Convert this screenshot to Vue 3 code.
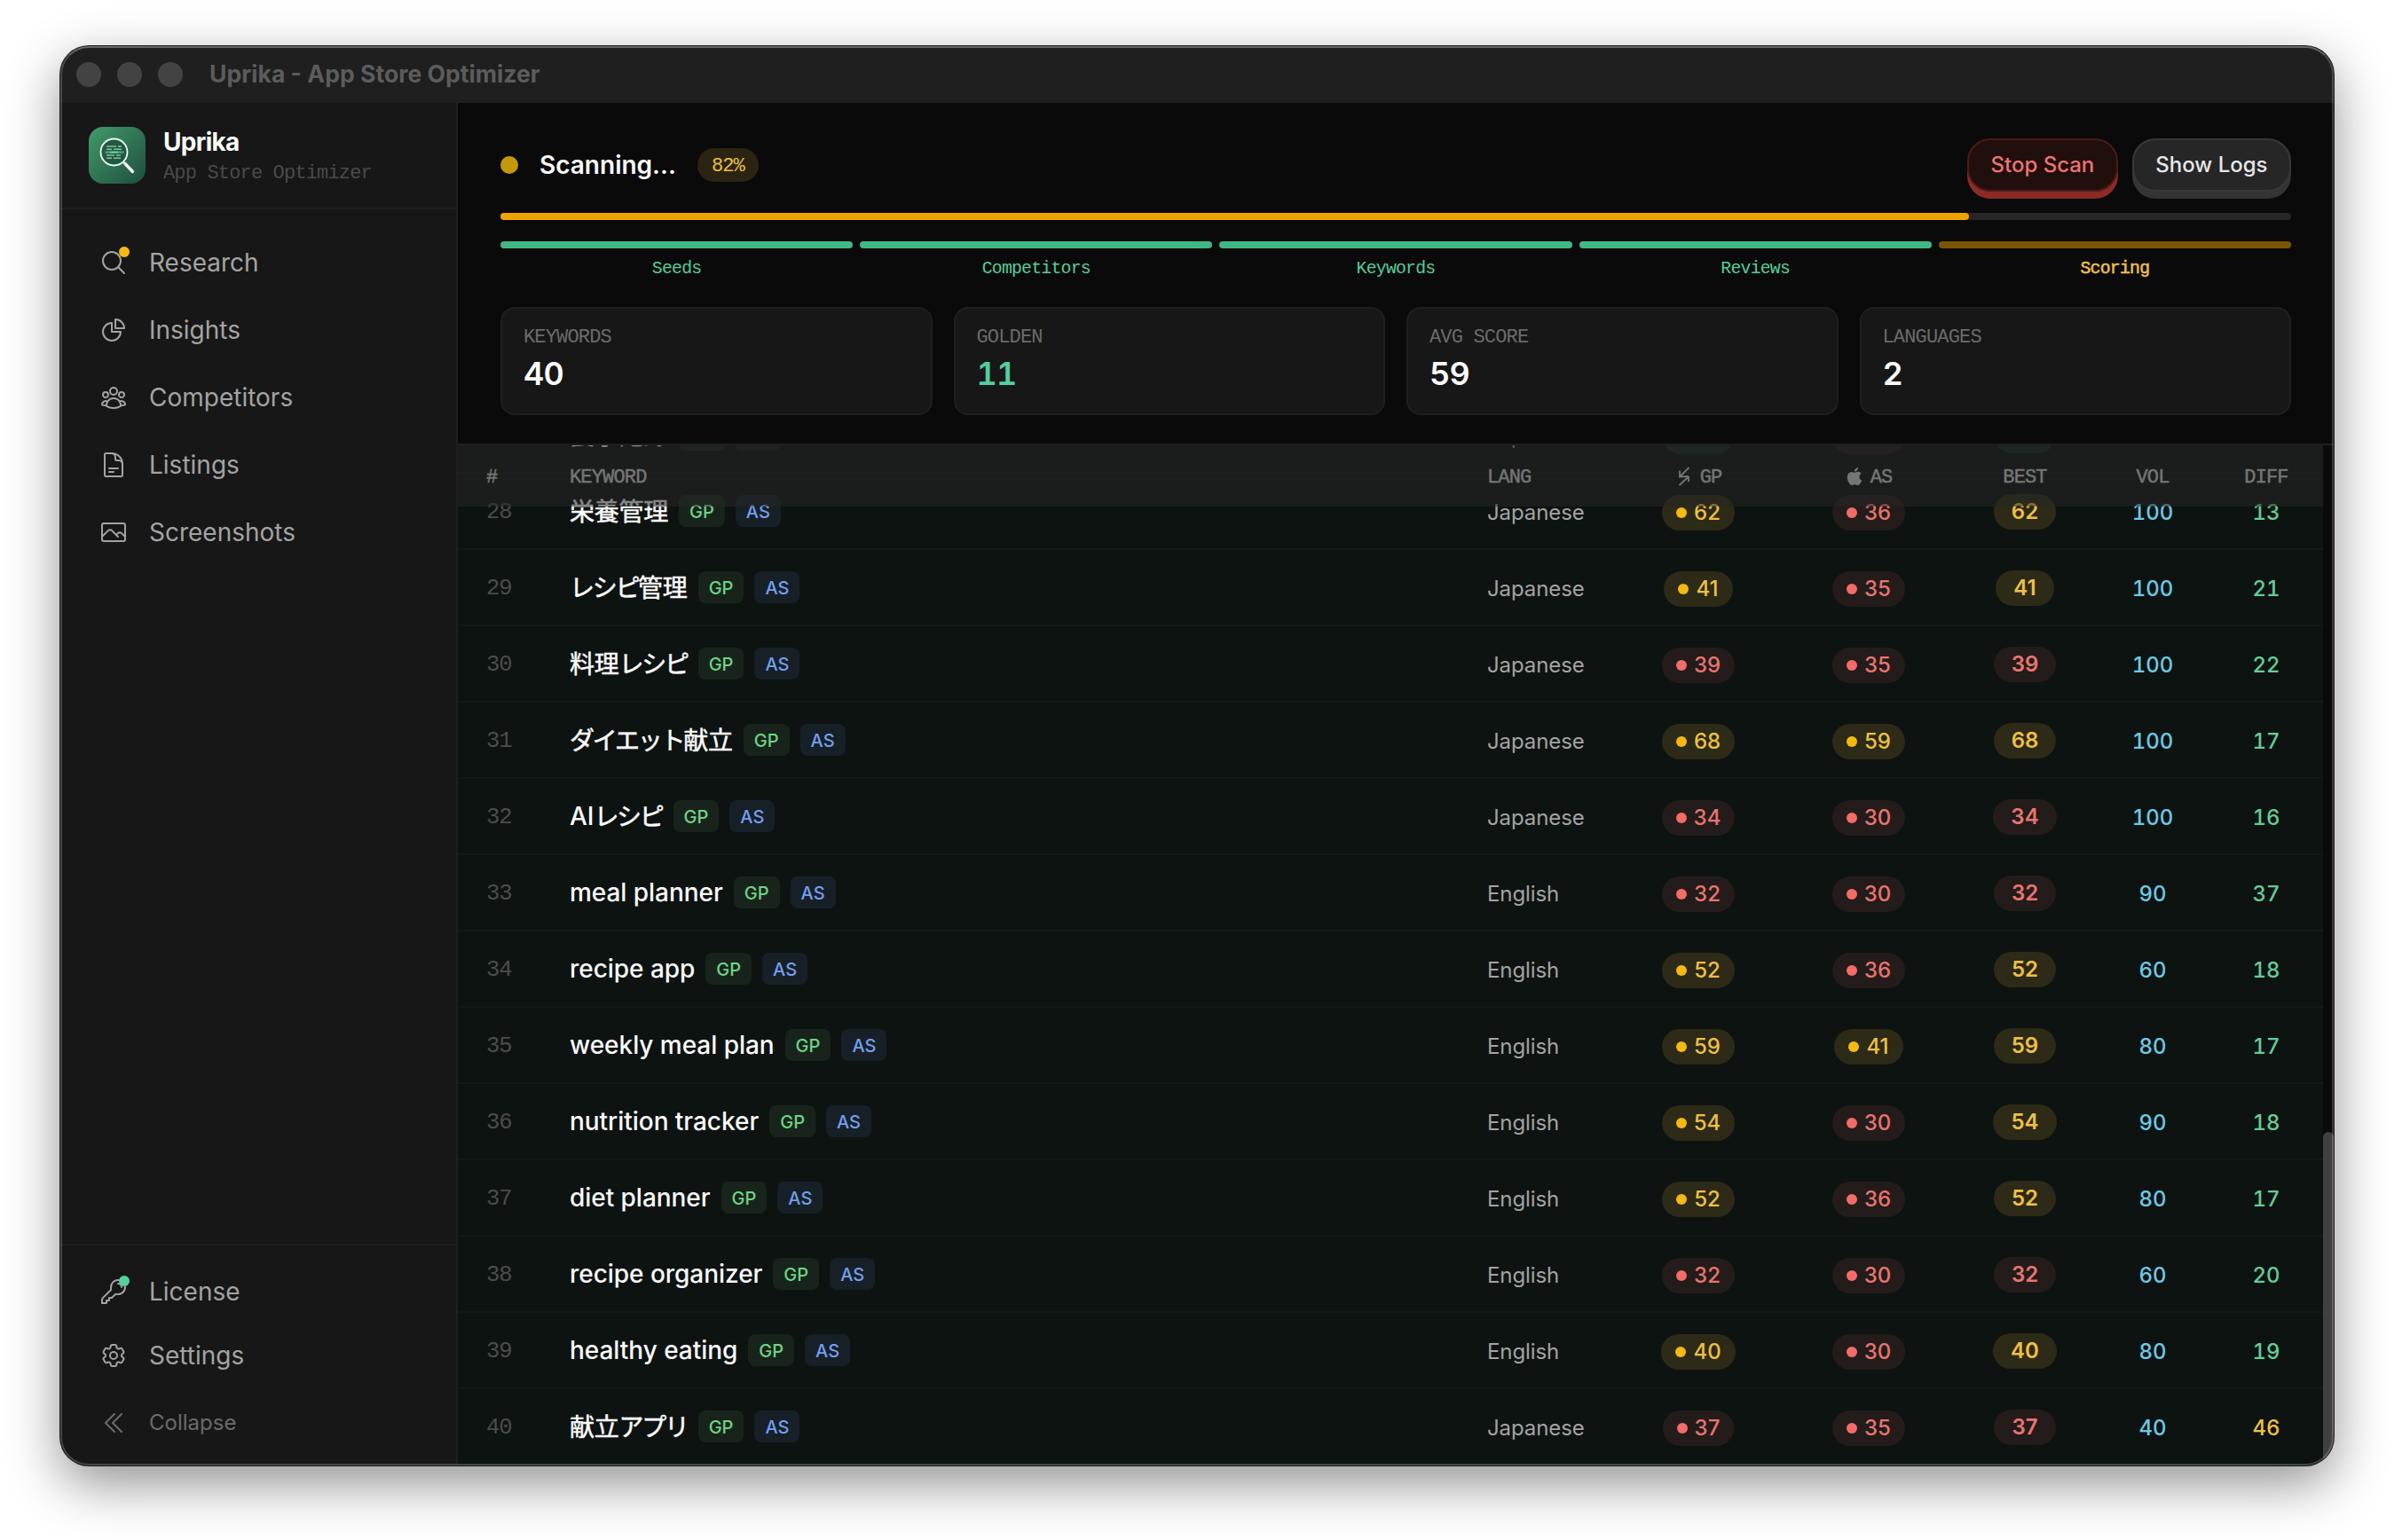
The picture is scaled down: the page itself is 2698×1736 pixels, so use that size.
<template>
  <div class="desktop">
    <div class="window">
      <header class="titlebar">
        <span v-for="n in 3" :key="n" class="light"></span>
        <span class="titlebar-text">Uprika - App Store Optimizer</span>
      </header>

      <div class="body">
        <aside class="sidebar">
          <div class="brand">
            <svg class="logo" viewBox="0 0 64 64">
              <defs>
                <linearGradient id="logo-bg" x1="0" y1="0" x2="1" y2="1">
                  <stop offset="0" stop-color="#429a6b" />
                  <stop offset="1" stop-color="#1d4f3d" />
                </linearGradient>
              </defs>
              <rect width="64" height="64" rx="16" fill="url(#logo-bg)" />
              <circle cx="28.5" cy="28.5" r="15" fill="#1f5a41" stroke="#f2fbf6" stroke-width="1.8" />
              <path d="M38.5 39l3.5 3" stroke="#f2fbf6" stroke-width="2" />
              <path d="M41 41.5l8.5 9" stroke="#f2fbf6" stroke-width="3.4" stroke-linecap="round" />
              <g stroke="#8fb8a3" stroke-width="1.5">
                <path d="M20 22h11M33 22h4M20 25.2h6M28 25.2h9M20 32h9M31 32h5M20 35.2h6M28 35.2h8" />
              </g>
              <path d="M18.5 28.6h21" stroke="#3f9d70" stroke-width="2.6" />
              <path d="M24 28.6h9" stroke="#6fd3a0" stroke-width="1.6" />
            </svg>
            <div class="brand-text">
              <span class="brand-name">Uprika</span>
              <span class="brand-sub">App Store Optimizer</span>
            </div>
          </div>

          <nav class="nav">
            <a v-for="item in navItems" :key="item.label" class="nav-item">
              <span class="nav-icon">
                <svg viewBox="0 0 24 24"><path v-for="d in item.paths" :key="d" :d="d" /></svg>
                <i v-if="item.dot" class="nav-dot" :class="item.dot"></i>
              </span>
              {{ item.label }}
            </a>
          </nav>

          <div class="nav-bottom">
            <a v-for="item in bottomItems" :key="item.label" class="nav-item" :class="{ collapse: item.collapse }">
              <span class="nav-icon">
                <svg viewBox="0 0 24 24"><path v-for="d in item.paths" :key="d" :d="d" /></svg>
                <i v-if="item.dot" class="nav-dot" :class="item.dot"></i>
              </span>
              {{ item.label }}
            </a>
          </div>
        </aside>

        <main class="main">
          <section class="scan">
            <div class="scan-head">
              <span class="scan-dot"></span>
              <h1 class="scan-title">Scanning...</h1>
              <span class="scan-percent">{{ progress }}%</span>
              <div class="actions">
                <button class="btn btn-stop">Stop Scan</button>
                <button class="btn btn-logs">Show Logs</button>
              </div>
            </div>

            <div class="progress">
              <div class="progress-fill" :style="{ width: progress + '%' }"></div>
            </div>

            <div class="steps">
              <div v-for="step in steps" :key="step" class="step" :class="{ active: step === activeStep }">
                <div class="step-bar"></div>
                <span class="step-label">{{ step }}</span>
              </div>
            </div>

            <div class="stats">
              <div v-for="stat in stats" :key="stat.label" class="stat">
                <span class="stat-label">{{ stat.label }}</span>
                <span class="stat-value" :class="{ golden: stat.golden }">{{ stat.value }}</span>
              </div>
            </div>
          </section>

          <section class="results">
            <div class="table">
              <div class="rows">
                <div v-for="row in rows" :key="row.n" class="row">
                  <span class="cell-num">{{ row.n }}</span>
                  <span class="cell-keyword">
                    <span class="keyword">
                      <span v-for="run in textRuns(row.keyword)" :key="run.text" :class="run.script">{{ run.text }}</span>
                    </span>
                    <span class="badge badge-gp">GP</span>
                    <span class="badge badge-as">AS</span>
                  </span>
                  <span class="cell-lang">{{ row.lang }}</span>
                  <span class="cell-center">
                    <span class="score" :class="tone(row.gp)"><i class="score-dot"></i><b>{{ row.gp }}</b></span>
                  </span>
                  <span class="cell-center">
                    <span class="score" :class="tone(row.as)"><i class="score-dot"></i><b>{{ row.as }}</b></span>
                  </span>
                  <span class="cell-center">
                    <span class="score best" :class="tone(Math.max(row.gp, row.as))">
                      <b>{{ Math.max(row.gp, row.as) }}</b>
                    </span>
                  </span>
                  <span class="cell-center metric vol">{{ row.vol }}</span>
                  <span class="cell-center metric" :class="row.diff > 40 ? 'hard' : 'easy'">{{ row.diff }}</span>
                </div>
              </div>

              <div class="row head">
                <span class="cell-num">#</span>
                <span class="cell-keyword">KEYWORD</span>
                <span class="cell-lang">LANG</span>
                <span class="cell-center head-store">
                  <svg viewBox="0 0 20 20">
                    <path class="icon-play" d="M15.5 0L5 10.5M5 3.5v7l10-.5M15.5 10L4.500 20M15 10v6" />
                  </svg>
                  <span>GP</span>
                </span>
                <span class="cell-center head-store">
                  <svg viewBox="0 0 24 24">
                    <path class="icon-apple" d="M12.152 6.896c-.948 0-2.415-1.078-3.960-1.040-2.040.027-3.910 1.183-4.961 3.014-2.117 3.675-.546 9.103 1.519 12.090 1.013 1.454 2.208 3.090 3.792 3.039 1.520-.065 2.090-.987 3.935-.987 1.831 0 2.350.987 3.960.948 1.637-.026 2.676-1.480 3.676-2.948 1.156-1.688 1.636-3.325 1.662-3.415-.039-.013-3.182-1.221-3.220-4.857-.026-3.040 2.480-4.494 2.597-4.559-1.429-2.090-3.623-2.324-4.390-2.376-2-.156-3.675 1.090-4.610 1.090zM15.530 3.830c.843-1.012 1.400-2.427 1.245-3.830-1.207.052-2.662.805-3.532 1.818-.780.896-1.454 2.338-1.273 3.714 1.338.104 2.715-.688 3.559-1.701" />
                  </svg>
                  <span>AS</span>
                </span>
                <span class="cell-center">BEST</span>
                <span class="cell-center">VOL</span>
                <span class="cell-center">DIFF</span>
              </div>
            </div>
            <div class="scrollbar"><div class="thumb"></div></div>
          </section>
        </main>
      </div>
    </div>
  </div>
</template>

<script setup>
import { ref } from 'vue';

const progress = ref(82);
const steps = ['Seeds', 'Competitors', 'Keywords', 'Reviews', 'Scoring'];
const activeStep = ref('Scoring');

const navItems = [
  {
    label: 'Research',
    dot: 'yellow',
    paths: ['m21 21-5.197-5.197m0 0A7.500 7.500 0 1 0 5.196 5.196a7.500 7.500 0 0 0 10.607 10.607Z'],
  },
  {
    label: 'Insights',
    paths: [
      'M10.500 6a7.500 7.500 0 1 0 7.500 7.500h-7.500V6Z',
      'M13.500 10.500H21A7.500 7.500 0 0 0 13.500 3v7.500Z',
    ],
  },
  {
    label: 'Competitors',
    paths: [
      'M18 18.720a9.094 9.094 0 0 0 3.741-.479 3 3 0 0 0-4.682-2.720m.940 3.198.001.031c0 .225-.012.447-.037.666A11.944 11.944 0 0 1 12 21c-2.170 0-4.207-.576-5.963-1.584A6.062 6.062 0 0 1 6 18.719m12 0a5.971 5.971 0 0 0-.941-3.197m0 0A5.995 5.995 0 0 0 12 12.750a5.995 5.995 0 0 0-5.058 2.772m0 0a3 3 0 0 0-4.681 2.720 8.986 8.986 0 0 0 3.740.477m.940-3.197a5.971 5.971 0 0 0-.940 3.197M15 6.750a3 3 0 1 1-6 0 3 3 0 0 1 6 0Zm6 3a2.250 2.250 0 1 1-4.500 0 2.250 2.250 0 0 1 4.500 0Zm-13.500 0a2.250 2.250 0 1 1-4.500 0 2.250 2.250 0 0 1 4.500 0Z',
    ],
  },
  {
    label: 'Listings',
    paths: [
      'M19.500 14.250v-2.625a3.375 3.375 0 0 0-3.375-3.375h-1.500A1.125 1.125 0 0 1 13.500 7.125v-1.500a3.375 3.375 0 0 0-3.375-3.375H8.250m0 12.750h7.500m-7.500 3H12M10.500 2.250H5.625c-.621 0-1.125.504-1.125 1.125v17.250c0 .621.504 1.125 1.125 1.125h12.750c.621 0 1.125-.504 1.125-1.125V11.250a9 9 0 0 0-9-9Z',
    ],
  },
  {
    label: 'Screenshots',
    paths: [
      'm2.250 15.750 5.159-5.159a2.250 2.250 0 0 1 3.182 0l5.159 5.159m-1.500-1.500 1.409-1.409a2.250 2.250 0 0 1 3.182 0l2.909 2.909m-18 3.750h16.500a1.500 1.500 0 0 0 1.500-1.500V6a1.500 1.500 0 0 0-1.500-1.500H3.750A1.500 1.500 0 0 0 2.250 6v12a1.500 1.500 0 0 0 1.500 1.500Z',
    ],
  },
];

const bottomItems = [
  {
    label: 'License',
    dot: 'green',
    paths: [
      'M15.750 5.250a3 3 0 0 1 3 3m3 0a6 6 0 0 1-7.029 5.912c-.563-.097-1.159.026-1.563.430L10.500 17.250H8.250v2.250H6v2.250H2.250v-2.818c0-.597.237-1.170.659-1.591l6.499-6.499c.404-.404.527-1 .430-1.563A6 6 0 1 1 21.750 8.250Z',
    ],
  },
  {
    label: 'Settings',
    paths: [
      'M9.594 3.940c.090-.542.560-.940 1.110-.940h2.593c.550 0 1.020.398 1.110.940l.213 1.281c.063.374.313.686.645.870.074.040.147.083.220.127.325.196.720.257 1.075.124l1.217-.456a1.125 1.125 0 0 1 1.370.490l1.296 2.247a1.125 1.125 0 0 1-.260 1.431l-1.003.827c-.293.241-.438.613-.430.992a7.723 7.723 0 0 1 0 .255c-.008.378.137.750.430.991l1.004.827c.424.350.534.955.260 1.430l-1.298 2.247a1.125 1.125 0 0 1-1.369.491l-1.217-.456c-.355-.133-.750-.072-1.076.124a6.470 6.470 0 0 1-.220.128c-.331.183-.581.495-.644.869l-.213 1.281c-.090.543-.560.940-1.110.940h-2.594c-.550 0-1.019-.398-1.110-.940l-.213-1.281c-.062-.374-.312-.686-.644-.870a6.520 6.520 0 0 1-.220-.127c-.325-.196-.720-.257-1.076-.124l-1.217.456a1.125 1.125 0 0 1-1.369-.490l-1.297-2.247a1.125 1.125 0 0 1 .260-1.431l1.004-.827c.292-.240.437-.613.430-.991a6.932 6.932 0 0 1 0-.255c.007-.380-.138-.751-.430-.992l-1.004-.827a1.125 1.125 0 0 1-.260-1.430l1.297-2.247a1.125 1.125 0 0 1 1.370-.491l1.216.456c.356.133.751.072 1.076-.124.072-.044.146-.086.220-.128.332-.183.582-.495.644-.869l.214-1.280Z',
      'M15 12a3 3 0 1 1-6 0 3 3 0 0 1 6 0Z',
    ],
  },
  {
    label: 'Collapse',
    collapse: true,
    paths: ['m18.750 4.500-7.500 7.500 7.500 7.500m-6-15L5.250 12l7.500 7.500'],
  },
];

const stats = [
  { label: 'KEYWORDS', value: 40 },
  { label: 'GOLDEN', value: 11, golden: true },
  { label: 'AVG SCORE', value: 59 },
  { label: 'LANGUAGES', value: 2 },
];

const rows = [
  { n: 27, keyword: '食事記録', lang: 'Japanese', gp: 72, as: 36, vol: 100, diff: 15 },
  { n: 28, keyword: '栄養管理', lang: 'Japanese', gp: 62, as: 36, vol: 100, diff: 13 },
  { n: 29, keyword: 'レシピ管理', lang: 'Japanese', gp: 41, as: 35, vol: 100, diff: 21 },
  { n: 30, keyword: '料理レシピ', lang: 'Japanese', gp: 39, as: 35, vol: 100, diff: 22 },
  { n: 31, keyword: 'ダイエット献立', lang: 'Japanese', gp: 68, as: 59, vol: 100, diff: 17 },
  { n: 32, keyword: 'AIレシピ', lang: 'Japanese', gp: 34, as: 30, vol: 100, diff: 16 },
  { n: 33, keyword: 'meal planner', lang: 'English', gp: 32, as: 30, vol: 90, diff: 37 },
  { n: 34, keyword: 'recipe app', lang: 'English', gp: 52, as: 36, vol: 60, diff: 18 },
  { n: 35, keyword: 'weekly meal plan', lang: 'English', gp: 59, as: 41, vol: 80, diff: 17 },
  { n: 36, keyword: 'nutrition tracker', lang: 'English', gp: 54, as: 30, vol: 90, diff: 18 },
  { n: 37, keyword: 'diet planner', lang: 'English', gp: 52, as: 36, vol: 80, diff: 17 },
  { n: 38, keyword: 'recipe organizer', lang: 'English', gp: 32, as: 30, vol: 60, diff: 20 },
  { n: 39, keyword: 'healthy eating', lang: 'English', gp: 40, as: 30, vol: 80, diff: 19 },
  { n: 40, keyword: '献立アプリ', lang: 'Japanese', gp: 37, as: 35, vol: 40, diff: 46 },
];

function tone(score) {
  if (score >= 70) return 'good';
  if (score >= 40) return 'mid';
  return 'low';
}

// splits a keyword into kana, kanji and latin runs, kana is set tighter
function textRuns(keyword) {
  const parts = keyword.match(/[\u30a0-\u30ff]+|[\u4e00-\u9fff]+|[\x20-\x7e]+/g);
  return parts.map((text) => {
    if (/[\u30a0-\u30ff]/.test(text)) return { text, script: 'kana' };
    if (/[\u4e00-\u9fff]/.test(text)) return { text, script: 'kanji' };
    return { text, script: 'latin' };
  });
}
</script>

<style>
body {
  background: #fff;
}
</style>

<style scoped>
.desktop {
  box-sizing: border-box;
  width: 2698px;
  height: 1736px;
  padding: 52px 68px 84px;
  background: #fff;
  overflow: hidden;
  font-family: Inter, "Noto Sans CJK JP", sans-serif;
  color: #fafafa;
}

.desktop *,
.desktop *::after {
  box-sizing: border-box;
}

.window {
  position: relative;
  display: flex;
  flex-direction: column;
  width: 2562px;
  height: 1600px;
  border-radius: 32px;
  background: #0a0a0a;
  box-shadow: 0 0 0 1px #1c1c1c, 0 20px 60px rgba(0, 0, 0, 0.44);
}

/* hairline highlight drawn over the window edge */
.window::after {
  content: "";
  position: absolute;
  inset: 0;
  border: 2px solid rgba(255, 255, 255, 0.2);
  border-top-color: rgba(255, 255, 255, 0.32);
  border-radius: 32px;
  pointer-events: none;
}

.titlebar {
  display: flex;
  align-items: center;
  gap: 18px;
  height: 64px;
  padding-left: 18px;
  background: #1f1f1f;
  border-radius: 32px 32px 0 0;
}

.light {
  width: 28px;
  height: 28px;
  border-radius: 50%;
  background: #434343;
}

.titlebar-text {
  margin-left: 12px;
  padding-bottom: 3px;
  font-size: 26.6px;
  font-weight: 700;
  color: #5c5c5c;
}

.body {
  flex: 1;
  display: flex;
  min-height: 0;
  border-radius: 0 0 32px 32px;
  overflow: hidden;
}

.sidebar {
  display: flex;
  flex-direction: column;
  width: 448px;
  border-right: 2px solid #1f1f1f;
  background: #171717;
}

.brand {
  display: flex;
  align-items: center;
  gap: 20px;
  height: 120px;
  padding: 0 32px;
  border-bottom: 2px solid #1f1f1f;
}

.logo {
  width: 64px;
  height: 64px;
}

.brand-text {
  display: flex;
  flex-direction: column;
  padding-top: 6px;
}

.brand-name {
  font-size: 28px;
  line-height: 36px;
  font-weight: 700;
  letter-spacing: -0.7px;
}

.brand-sub,
.scan-percent,
.stat-label,
.head {
  font-family: "Liberation Mono", monospace;
  font-size: 22px;
  letter-spacing: -0.84px;
}

.brand-sub {
  line-height: 36px;
  color: #4a4a4a;
}

.nav {
  flex: 1;
  display: flex;
  flex-direction: column;
  gap: 4px;
  padding: 24px;
}

.nav-bottom {
  display: flex;
  flex-direction: column;
  padding: 16px 24px;
  border-top: 2px solid #1f1f1f;
}

.nav-item {
  display: flex;
  align-items: center;
  gap: 24px;
  height: 72px;
  padding: 0 20px;
  font-size: 28px;
  color: #a3a3a3;
}

.nav-item.collapse {
  height: 64px;
  margin-top: 8px;
  padding-bottom: 1px;
  font-size: 24px;
  color: #6b6b6b;
}

.nav-icon {
  position: relative;
  display: flex;
  width: 32px;
  height: 32px;
}

.nav-icon svg {
  width: 32px;
  height: 32px;
  fill: none;
  stroke: currentColor;
  stroke-width: 1.5;
  stroke-linecap: round;
  stroke-linejoin: round;
}

.nav-dot {
  position: absolute;
  top: -2px;
  right: -2px;
  width: 12px;
  height: 12px;
  border-radius: 50%;
}

.nav-dot.yellow { background: #f5b90f; }
.nav-dot.green  { background: #52d19b; }

.main {
  flex: 1;
  display: flex;
  flex-direction: column;
  min-width: 0;
}

.scan {
  height: 386px;
  padding: 40px 48px 0;
  border-bottom: 2px solid #1f1f1f;
}

.scan-head {
  display: flex;
  align-items: center;
  gap: 24px;
  height: 60px;
}

.scan-dot {
  width: 20px;
  height: 20px;
  border-radius: 50%;
  background: #c3980b;
}

.scan-title {
  margin: 0;
  font-size: 28px;
  font-weight: 600;
}

.scan-percent {
  height: 38px;
  padding: 0 16px;
  border-radius: 19px;
  background: #2b2412;
  line-height: 41px;
  color: #edc045;
}

.actions {
  display: flex;
  gap: 16px;
  margin-left: auto;
}

.btn {
  height: 60px;
  padding: 0 24.5px 2px;
  border: 2px solid;
  border-radius: 26px;
  font-family: inherit;
  font-size: 24px;
  font-weight: 500;
}

.btn-stop {
  border-color: #4d1a18;
  background: #210f0e;
  box-shadow: 0 8px 0 #8c2a24;
  color: #ef7370;
}

.btn-logs {
  border-color: #383838;
  background: #262626;
  box-shadow: 0 8px 0 #343434;
  color: #e8e8e8;
}

.progress {
  height: 8px;
  margin-top: 24px;
  border-radius: 4px;
  background: #262626;
}

.progress-fill {
  height: 100%;
  border-radius: 4px;
  background: #f0a202;
}

.steps {
  display: grid;
  grid-template-columns: repeat(5, 1fr);
  gap: 8px;
  margin-top: 24px;
}

.step {
  display: flex;
  flex-direction: column;
  align-items: center;
  color: #52cf9c;
}

.step-bar {
  width: 100%;
  height: 8px;
  border-radius: 4px;
  background: #40b884;
}

.step-label {
  margin-top: 10px;
  font-family: "Liberation Mono", monospace;
  font-size: 19.8px;
  line-height: 26px;
  letter-spacing: -0.76px;
}

.step.active {
  color: #f0c04a;
}

.step.active .step-bar {
  background: #7c5604;
}

.step.active .step-label {
  -webkit-text-stroke: 0.5px currentColor;
}

.stats {
  display: grid;
  grid-template-columns: repeat(4, 1fr);
  gap: 24px;
  margin-top: 30px;
}

.stat {
  display: flex;
  flex-direction: column;
  height: 122px;
  padding: 18px 24px 0;
  border: 2px solid #1f1f1f;
  border-radius: 16px;
  background: #171717;
}

.stat-label {
  line-height: 30px;
  color: #6b6b6b;
}

.stat-value {
  font-size: 36px;
  line-height: 50px;
  font-weight: 600;
  letter-spacing: -0.9px;
  font-variant-numeric: tabular-nums;
}

.stat-value.golden {
  color: #52cf9c;
}

.results {
  flex: 1;
  display: flex;
  min-height: 0;
}

/* rows and header share one grid area, the header floats over the scrolled rows */
.table {
  flex: 1;
  display: grid;
  grid-template-rows: 1150px;
  overflow: hidden;
}

.rows {
  grid-area: 1 / 1;
  align-self: end;
}

.row {
  display: grid;
  grid-template-columns: 94px 1fr 174px 192px 192px 160px 128px 128px;
  align-items: center;
  height: 86px;
  border-bottom: 2px solid #131917;
  background: #0d1311;
}

.cell-num,
.cell-keyword,
.cell-lang {
  padding-left: 32px;
}

.cell-num {
  padding-top: 3px;
  font-family: "Liberation Mono", monospace;
  font-size: 25.5px;
  letter-spacing: -1px;
  color: #4a4d4c;
}

.cell-keyword {
  display: flex;
  align-items: center;
}

.keyword {
  display: flex;
  font-size: 28px;
  line-height: 40px;
  font-weight: 500;
}

.latin { letter-spacing: -0.04px; }

.kanji,
.kana {
  padding-top: 1px;
  font-weight: 400;
  -webkit-text-stroke: 0.5px currentColor;
}

.kanji { letter-spacing: -0.25px; }
.kana  { letter-spacing: -2.3px; }

.badge {
  height: 36px;
  margin-left: 12px;
  padding: 1px 12px 0;
  border-radius: 8px;
  font-size: 20px;
  line-height: 36px;
  font-weight: 500;
}

.badge-gp {
  background: #18241b;
  color: #6fd486;
}

.badge-as {
  background: #172027;
  color: #739fee;
}

.cell-lang {
  padding-top: 2px;
  font-size: 24px;
  letter-spacing: -0.1px;
  color: #a3a3a3;
}

.cell-center {
  display: flex;
  align-items: center;
  justify-content: center;
}

.score {
  display: flex;
  align-items: center;
  gap: 8px;
  height: 40px;
  margin-top: 4px;
  padding: 0 16px;
  border-radius: 20px;
  font-size: 24px;
}

.score b {
  padding-bottom: 2px;
  font-weight: 500;
}

.score.best {
  margin-top: 2px;
  padding: 0 20px;
}

.score.best b {
  font-weight: 600;
}

.score-dot {
  width: 12px;
  height: 12px;
  border-radius: 50%;
}

.mid  { background: #2d2a17; color: #edc045; }
.low  { background: #231c1a; color: #e87470; }
.good { background: #14291f; color: #52cf9c; }

.mid .score-dot  { background: #f5b90f; }
.low .score-dot  { background: #f36c68; }
.good .score-dot { background: #52cf9c; }

.metric {
  padding-top: 2px;
  font-size: 24px;
  font-weight: 500;
  font-variant-numeric: tabular-nums;
}

.vol  { color: #6cc9e6; }
.easy { color: #62cd9a; }
.hard { color: #edc045; }

.head {
  grid-area: 1 / 1;
  align-self: start;
  height: 69px;
  padding-top: 4px;
  border: 0;
  background: rgba(38, 38, 38, 0.55);
  color: #757575;
  -webkit-text-stroke: 0.5px currentColor;
}

.head .cell-num,
.head .cell-lang {
  padding-top: 0;
  font-size: inherit;
  letter-spacing: inherit;
  color: inherit;
}

.head-store {
  gap: 8px;
}

.head-store svg {
  width: 20px;
  height: 20px;
  margin-bottom: 4px;
  overflow: visible;
}

.icon-play {
  fill: none;
  stroke: currentColor;
  stroke-width: 1.8;
}

.icon-apple {
  fill: currentColor;
}

.scrollbar {
  display: flex;
  align-items: flex-end;
  width: 12px;
  background: #0a0a0a;
}

.thumb {
  width: 12px;
  height: 376px;
  border-radius: 6px 6px 0 0;
  background: #404040;
}
</style>
